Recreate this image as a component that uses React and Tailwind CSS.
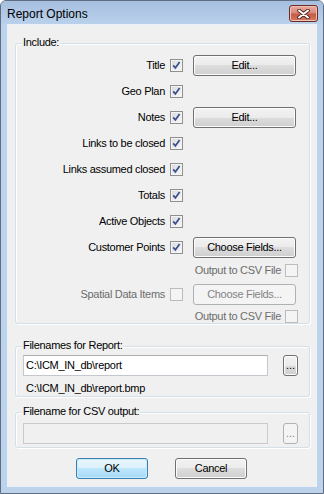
import React from "react";

function Check({ checked = true, disabled = false }) {
  if (disabled) {
    return <div className="w-[13px] h-[13px] shrink-0 border border-[#bcbcbc] bg-[#f4f4f4]" />;
  }
  return (
    <div className="w-[13px] h-[13px] shrink-0 border border-[#8f8f8f] bg-[linear-gradient(135deg,#d6d8dc,#f9f9f9)] shadow-[inset_0_0_0_1px_#f4f4f4] flex items-center justify-center">
      {checked && (
        <svg width="11" height="11" viewBox="0 0 11 11">
          <path d="M2.2 5.3 L4.4 7.9 L8.6 2" fill="none" stroke="#3e4f8c" strokeWidth="1.8" />
        </svg>
      )}
    </div>
  );
}

function Btn({ children, disabled = false, className = "" }) {
  const base = "h-[21px] rounded-[3px] border flex items-center justify-center leading-[13px] ";
  const style = disabled
    ? "border-[#adb2b5] bg-[#f4f4f4] text-[#838383] "
    : "border-[#707070] bg-[linear-gradient(#f2f2f2,#ebebeb_50%,#dddddd_50%,#cfcfcf)] shadow-[inset_0_0_0_1px_#fcfcfc] text-black ";
  return <div className={base + style + className}>{children}</div>;
}

function Row({ label, disabled = false, button = null, buttonDisabled = false }) {
  return (
    <div className="h-[26px] flex items-center">
      <span className={"w-[149px] text-right leading-[13px] " + (disabled ? "text-[#6d6d6d]" : "text-black")}>{label}</span>
      <div className="ml-[5px]">
        <Check checked={!disabled} disabled={disabled} />
      </div>
      {button && (
        <Btn disabled={buttonDisabled} className="ml-[10px] w-[103px]">
          {button}
        </Btn>
      )}
    </div>
  );
}

function CsvRow({ className = "" }) {
  return (
    <div className={"flex justify-end pr-[11px] " + className}>
      <div className="flex items-center gap-[4px]">
        <span className="text-[#6d6d6d] leading-[13px]">Output to CSV File</span>
        <Check disabled />
      </div>
    </div>
  );
}

function Group({ label, className = "", children }) {
  return (
    <div className={"relative mx-[7px] mr-[6px] border border-[#d5dfe5] rounded-[3px] shadow-[inset_1px_1px_0_#ffffff,1px_1px_0_#ffffff] " + className}>
      <span className="absolute left-[6px] -top-[8px] px-[1px] bg-[#f0f0f0] leading-[13px] text-black">{label}</span>
      {children}
    </div>
  );
}

export default function App() {
  return (
    <div className="w-[324px] h-[494px] flex flex-col bg-[#bdd3ec] border border-[#5d6e84] rounded-t-[6px] overflow-hidden font-['Liberation_Sans',Arial,sans-serif] text-[11px] tracking-[-0.3px] select-none">
      {/* Title bar */}
      <div className="h-[23px] flex items-start justify-between bg-[linear-gradient(#a6bfdf,#bad1eb)]">
        <span className="pl-[6px] pt-[6px] text-[12px] leading-[15px] tracking-normal text-black">Report Options</span>
        <div className="mt-[4px] mr-[5px] w-[29px] h-[17px] rounded-[3px] border border-[#6b2b27] bg-[linear-gradient(#e9ab9e,#d78a7c_45%,#c75a48_55%,#d27a5e)] shadow-[inset_0_0_0_1px_#f0c2b6] flex items-center justify-center">
          <svg width="13" height="10" viewBox="0 0 13 10">
            <path d="M2 1.5 L11 8.5 M11 1.5 L2 8.5" fill="none" stroke="#4a1f1c" strokeWidth="3.6" strokeLinecap="round" />
            <path d="M2 1.5 L11 8.5 M11 1.5 L2 8.5" fill="none" stroke="#ffffff" strokeWidth="2" strokeLinecap="round" />
          </svg>
        </div>
      </div>

      {/* Client area */}
      <div className="flex-1 mx-[6px] mb-[6px] border border-[#eaf1f9] bg-[#f0f0f0] flex flex-col">
        <Group label="Include:" className="mt-[18px] pt-[8px]">
          <Row label="Title" button="Edit..." />
          <Row label="Geo Plan" />
          <Row label="Notes" button="Edit..." />
          <Row label="Links to be closed" />
          <Row label="Links assumed closed" />
          <Row label="Totals" />
          <Row label="Active Objects" />
          <Row label="Customer Points" button="Choose Fields..." />
          <CsvRow className="h-[20px] items-center" />
          <div className="h-[28px] flex items-center">
            <span className="w-[149px] text-right leading-[13px] text-[#6d6d6d]">Spatial Data Items</span>
            <div className="ml-[5px]">
              <Check disabled />
            </div>
            <Btn disabled className="ml-[10px] w-[103px]">Choose Fields...</Btn>
          </div>
          <CsvRow className="h-[15px] items-end" />
        </Group>

        <Group label="Filenames for Report:" className="mt-[22px] pt-[8px] pl-[7px] pb-[1px]">
          <div className="flex items-center">
            <div className="w-[245px] h-[21px] bg-white border border-[#c4c7cd] border-t-[#abadb3] pl-[2px] flex items-center leading-[13px] text-black">
              C:\ICM_IN_db\report
            </div>
            <Btn className="ml-[15px] w-[15px] h-[20px] tracking-normal">...</Btn>
          </div>
          <div className="mt-[5px] h-[14px] leading-[14px] pl-[3px] text-black">C:\ICM_IN_db\report.bmp</div>
        </Group>

        <Group label="Filename for CSV output:" className="mt-[15px] pt-[10px] pl-[7px] pb-[3px]">
          <div className="flex items-center">
            <div className="w-[245px] h-[21px] bg-[#f0f0f0] border border-[#c9cacd]" />
            <Btn disabled className="ml-[15px] w-[15px] h-[20px] tracking-normal">...</Btn>
          </div>
        </Group>

        <div className="mt-[10px] flex justify-center gap-[27px] pr-[1px]">
          <div className="w-[72px] h-[21px] rounded-[3px] border border-[#3c7fb1] bg-[linear-gradient(#eaf6fd,#d9f0fc_50%,#bee6fd_50%,#a7d9f5)] shadow-[inset_0_0_0_1px_#c9ecfd] flex items-center justify-center leading-[13px] text-black">
            OK
          </div>
          <Btn className="w-[72px]">Cancel</Btn>
        </div>
      </div>
    </div>
  );
}
